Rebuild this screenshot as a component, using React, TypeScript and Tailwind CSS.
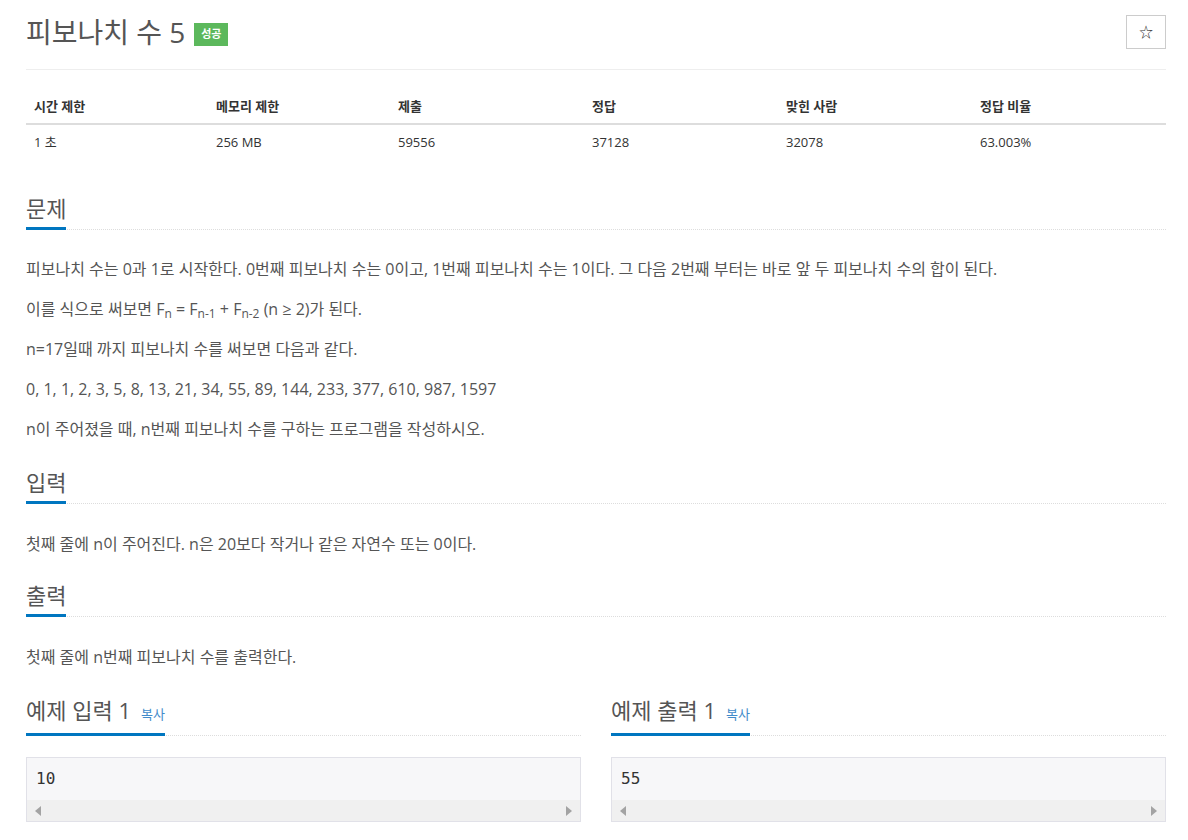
import React from 'react';

const FONT = { fontFamily: "'Open Sans', 'Noto Sans CJK KR', sans-serif" };

const stats = [
  { label: '시간 제한', value: '1 초', w: 'w-[182px]' },
  { label: '메모리 제한', value: '256 MB', w: 'w-[182px]' },
  { label: '제출', value: '59556', w: 'w-[194px]' },
  { label: '정답', value: '37128', w: 'w-[194px]' },
  { label: '맞힌 사람', value: '32078', w: 'w-[194px]' },
  { label: '정답 비율', value: '63.003%', w: 'w-[194px]' },
];

function Heading({ children }: { children: React.ReactNode }) {
  return (
    <div className="flex border-b border-dotted border-[#ddd]">
      <h3 className="-mb-px inline-flex items-baseline border-b-[3px] border-[#0076c0] pb-[7px] text-[22px] leading-[24px] font-normal text-[#555]">
        {children}
      </h3>
    </div>
  );
}

function Sample({ title, value }: { title: string; value: string }) {
  return (
    <div>
      <Heading>
        {title}
        <span className="ml-[10px] text-[13px] text-[#428bca]">복사</span>
      </Heading>
      <div className="mt-[21px] border border-[#e1e1e8] bg-[#f7f7f9]">
        <div
          className="px-[9px] py-[11px] text-[16px] leading-[20px] text-[#333]"
          style={{ fontFamily: "'DejaVu Sans Mono', monospace" }}
        >
          {value}
        </div>
        <div className="flex h-[21px] items-center justify-between bg-[#f0f0f0] px-[8px]">
          <span className="h-0 w-0 border-y-[5px] border-r-[6px] border-y-transparent border-r-[#a3a3a3]" />
          <span className="h-0 w-0 border-y-[5px] border-l-[6px] border-y-transparent border-l-[#a3a3a3]" />
        </div>
      </div>
    </div>
  );
}

export default function App() {
  return (
    <div className="min-h-[840px] bg-white" style={FONT}>
      <div className="ml-[26px] w-[1140px]">
        {/* title */}
        <div className="flex h-[70px] items-center justify-between border-b border-[#eee] pb-[6px]">
          <div className="flex items-center">
            <h1 className="text-[28px] leading-[36px] font-normal text-[#555]">피보나치 수 5</h1>
            <span className="ml-[9px] mt-[6px] flex h-[23px] w-[34px] items-center justify-center bg-[#5cb85c] text-[11px] font-bold text-white">
              성공
            </span>
          </div>
          <button className="flex h-[34px] w-[40px] items-center justify-center border border-[#ccc] bg-white text-[14px] text-[#333]">
            ☆
          </button>
        </div>

        {/* stats table */}
        <table className="mt-[19px] w-full table-fixed text-[13px] text-[#333]">
          <thead>
            <tr className="border-b-2 border-[#ddd]">
              {stats.map((s) => (
                <th key={s.label} className={`${s.w} px-[8px] py-[7px] text-left leading-[20px] font-bold`}>
                  {s.label}
                </th>
              ))}
            </tr>
          </thead>
          <tbody>
            <tr>
              {stats.map((s) => (
                <td key={s.label} className="px-[8px] py-[7px] leading-[20px]">
                  {s.value}
                </td>
              ))}
            </tr>
          </tbody>
        </table>

        {/* 문제 */}
        <section className="mt-[37px]">
          <Heading>문제</Heading>
          <div className="mt-[24px] text-[16px] leading-[30px] text-[#555]">
            <p className="mb-[10px]">
              피보나치 수는 0과 1로 시작한다. 0번째 피보나치 수는 0이고, 1번째 피보나치 수는 1이다. 그 다음 2번째 부터는 바로 앞 두 피보나치 수의 합이 된다.
            </p>
            <p className="mb-[10px]">
              이를 식으로 써보면 F<sub className="text-[12px]">n</sub> = F<sub className="text-[12px]">n-1</sub> + F
              <sub className="text-[12px]">n-2</sub> (n ≥ 2)가 된다.
            </p>
            <p className="mb-[10px]">n=17일때 까지 피보나치 수를 써보면 다음과 같다.</p>
            <p className="mb-[10px]">0, 1, 1, 2, 3, 5, 8, 13, 21, 34, 55, 89, 144, 233, 377, 610, 987, 1597</p>
            <p className="mb-[10px]">n이 주어졌을 때, n번째 피보나치 수를 구하는 프로그램을 작성하시오.</p>
          </div>
        </section>

        {/* 입력 */}
        <section className="mt-[26px]">
          <Heading>입력</Heading>
          <div className="mt-[25px] text-[16px] leading-[30px] text-[#555]">
            <p className="mb-[10px]">첫째 줄에 n이 주어진다. n은 20보다 작거나 같은 자연수 또는 0이다.</p>
          </div>
        </section>

        {/* 출력 */}
        <section className="mt-[24px]">
          <Heading>출력</Heading>
          <div className="mt-[25px] text-[16px] leading-[30px] text-[#555]">
            <p className="mb-[10px]">첫째 줄에 n번째 피보나치 수를 출력한다.</p>
          </div>
        </section>

        {/* samples */}
        <div className="mt-[26px] grid grid-cols-2 gap-x-[30px]">
          <Sample title="예제 입력 1" value="10" />
          <Sample title="예제 출력 1" value="55" />
        </div>
      </div>
    </div>
  );
}
